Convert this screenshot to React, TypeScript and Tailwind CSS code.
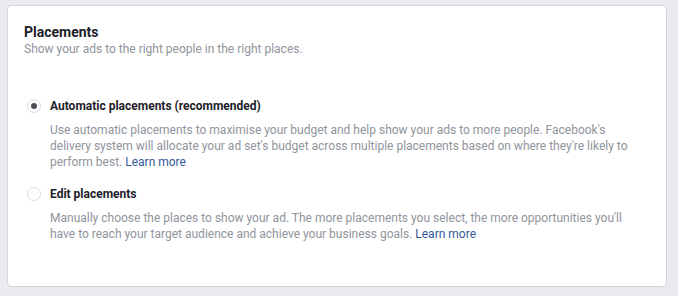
import React, { useState } from 'react'

interface PlacementOption {
  id: string
  label: string
  description: string
}

const options: PlacementOption[] = [
  {
    id: 'automatic',
    label: 'Automatic placements (recommended)',
    description:
      "Use automatic placements to maximise your budget and help show your ads to more people. Facebook's delivery system will allocate your ad set's budget across multiple placements based on where they're likely to perform best.",
  },
  {
    id: 'edit',
    label: 'Edit placements',
    description:
      "Manually choose the places to show your ad. The more placements you select, the more opportunities you'll have to reach your target audience and achieve your business goals.",
  },
]

const Radio: React.FC<{ checked: boolean }> = ({ checked }) => (
  <span className="flex h-[14px] w-[14px] shrink-0 items-center justify-center rounded-full border border-[#dadde1] bg-white">
    {checked && <span className="h-[6px] w-[6px] rounded-full bg-[#4b4f56]" />}
  </span>
)

export default function App() {
  const [selected, setSelected] = useState('automatic')

  return (
    <div
      className="min-h-[296px] bg-[#e9ebee] pl-[7px] pr-[11px] pt-[5px] pb-[9px]"
      style={{ fontFamily: 'Roboto, "Liberation Sans", Arial, sans-serif' }}
    >
      <div className="h-[282px] rounded-[4px] border border-[#d3d5d9] bg-white pl-4 pr-4 pt-[17px]">
        <h2 className="text-[14px] font-bold leading-[18px] text-[#1d2129]">Placements</h2>
        <p className="text-[12px] leading-[16px] text-[#90949c]">
          Show your ads to the right people in the right places.
        </p>

        <div className="mt-[41px] flex flex-col gap-4 pl-[3px]">
          {options.map((opt) => (
            <div key={opt.id} className="cursor-pointer" onClick={() => setSelected(opt.id)}>
              <div className="flex items-center gap-[9px]">
                <Radio checked={selected === opt.id} />
                <span className="text-[12px] font-bold leading-[16px] text-[#1d2129]">{opt.label}</span>
              </div>
              <p className="mt-2 pl-[23px] pr-2 text-[12px] leading-[16px] text-[#90949c]">
                {opt.description} <span className="text-[#365899]">Learn more</span>
              </p>
            </div>
          ))}
        </div>
      </div>
    </div>
  )
}
